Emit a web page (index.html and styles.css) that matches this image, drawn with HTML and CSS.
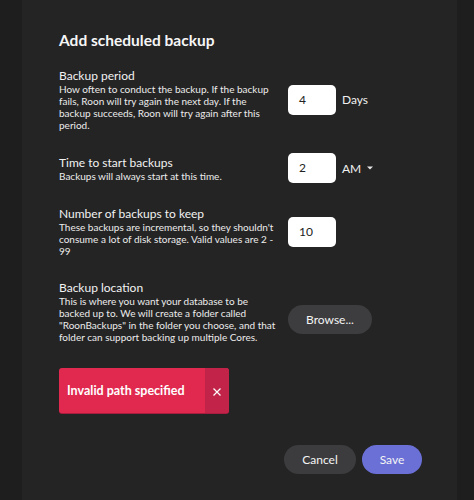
FILE: index.html
```html
<!DOCTYPE html>
<html>
<head>
<meta charset="utf-8">
<link rel="stylesheet" href="styles.css">
</head>
<body>
<div class="panel">
  <h1 class="title">Add scheduled backup</h1>

  <div class="row row-period">
    <div class="info">
      <div class="label">Backup period</div>
      <div class="desc">How often to conduct the backup. If the backup fails, Roon will try again the next day. If the backup succeeds, Roon will try again after this period.</div>
    </div>
    <div class="control">
      <div class="input">4</div>
      <span class="unit">Days</span>
    </div>
  </div>

  <div class="row row-time">
    <div class="info">
      <div class="label">Time to start backups</div>
      <div class="desc">Backups will always start at this time.</div>
    </div>
    <div class="control">
      <div class="input">2</div>
      <span class="unit">AM</span>
      <svg class="caret" width="6" height="4" viewBox="0 0 6 4"><path d="M0 0.5H6L3 3.5Z" fill="#e8e8e8"/></svg>
    </div>
  </div>

  <div class="row row-count">
    <div class="info">
      <div class="label">Number of backups to keep</div>
      <div class="desc">These backups are incremental, so they shouldn't consume a lot of disk storage. Valid values are 2 - 99</div>
    </div>
    <div class="control">
      <div class="input">10</div>
    </div>
  </div>

  <div class="row row-location">
    <div class="info">
      <div class="label">Backup location</div>
      <div class="desc">This is where you want your database to be backed up to. We will create a folder called "RoonBackups" in the folder you choose, and that folder can support backing up multiple Cores.</div>
    </div>
    <div class="control">
      <button class="btn browse">Browse...</button>
    </div>
  </div>

  <div class="toast">
    <div class="toast-msg">Invalid path specified</div>
    <div class="toast-close">
      <svg width="8" height="8" viewBox="0 0 8 8"><path d="M0.5 0.5L7.5 7.5M7.5 0.5L0.5 7.5" stroke="#fff" stroke-width="1.2"/></svg>
    </div>
  </div>

  <div class="actions">
    <button class="btn cancel">Cancel</button>
    <button class="btn save">Save</button>
  </div>
</div>
</body>
</html>
```

FILE: styles.css
```css
html, body {
  margin: 0;
  padding: 0;
  background: #1e1e1e;
  height: 100%;
}
body {
  font-family: Lato, "Open Sans", sans-serif;
  color: #f0f0f0;
}
.panel {
  margin: 0 17px 0 22px;
  background: #242424;
  min-height: 500px;
  box-sizing: border-box;
  padding: 30px 35px 0 37px;
}
.title {
  margin: 0;
  font-size: 15.5px;
  font-weight: 700;
  line-height: 20px;
  color: #f6f6f6;
}
.row {
  display: flex;
  align-items: center;
  gap: 11px;
}
.row-period { margin-top: 18px; }
.row-time { margin-top: 22px; }
.row-count { margin-top: 23px; }
.row-location { margin-top: 23px; }
.info {
  width: 218px;
  flex: none;
}
.label {
  font-size: 12px;
  line-height: 15px;
  color: #f2f2f2;
}
.desc {
  font-size: 10px;
  line-height: 12px;
  color: #ececec;
}
.control {
  display: flex;
  align-items: center;
}
.input {
  width: 48px;
  height: 30px;
  box-sizing: border-box;
  background: #fff;
  border-radius: 5px;
  color: #222;
  font-size: 12px;
  line-height: 30px;
  padding-left: 11px;
}
.unit {
  margin-left: 6px;
  font-size: 12px;
  color: #f0f0f0;
}
.caret {
  margin-left: 6px;
}
.btn {
  font-family: Lato, "Open Sans", sans-serif;
  font-size: 12px;
  color: #f4f4f4;
  border: none;
  height: 29px;
  border-radius: 14.5px;
  padding: 0;
  cursor: pointer;
}
.browse {
  width: 84px;
  background: #3d3d3f;
  margin-top: 16px;
}
.toast {
  margin-top: 25px;
  width: 170px;
  height: 45px;
  display: flex;
  border-radius: 3px;
  overflow: hidden;
  background: #e1294f;
  box-shadow: 0 1px 0 #a81d3f;
}
.toast-msg {
  flex: 1;
  font-size: 12.5px;
  font-weight: 700;
  color: #fff;
  padding: 15px 0 0 8px;
  white-space: nowrap;
}
.toast-close {
  width: 24px;
  background: #c12349;
  display: flex;
  justify-content: center;
  padding-top: 20px;
  box-sizing: border-box;
}
.actions {
  margin-top: 32px;
  display: flex;
  justify-content: flex-end;
  gap: 6px;
}
.cancel {
  width: 72px;
  background: #3c3c3e;
}
.save {
  width: 60px;
  background: #6b70d7;
}
```
